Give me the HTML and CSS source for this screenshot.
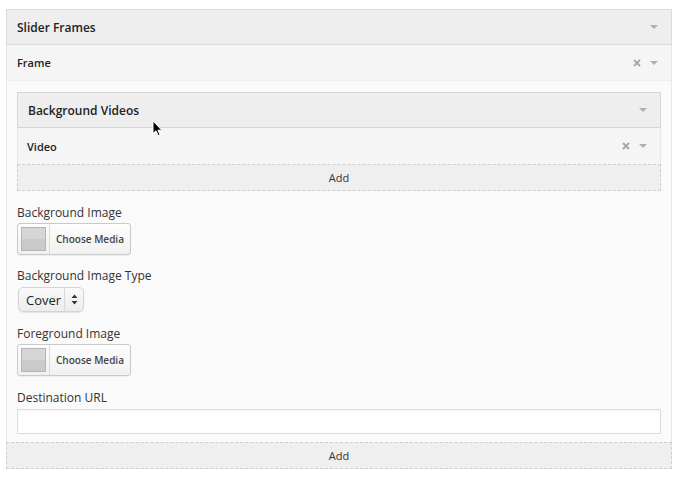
FILE: index.html
```html
<!DOCTYPE html>
<html lang="en">
<head>
    <meta charset="UTF-8">
    <title>Slider Frames</title>
    <link rel="stylesheet" href="styles.css">
</head>
<body>

    <div class="panel">
        <div class="panel-head">
            <span>Slider Frames</span>
            <span class="tools"><span class="caret"></span></span>
        </div>

        <div class="item">
            <div class="item-head">
                <span>Frame</span>
                <span class="tools">
                    <svg class="remove" width="8" height="8" viewBox="0 0 8 8"><path d="M1 1 L7 7 M7 1 L1 7" stroke="#a9a9a9" stroke-width="2"/></svg>
                    <span class="caret"></span>
                </span>
            </div>

            <div class="item-body">
                <div class="sub-panel">
                    <div class="panel-head sub-head">
                        <span>Background Videos</span>
                        <span class="tools"><span class="caret"></span></span>
                    </div>
                    <div class="item-head sub-item">
                        <span>Video</span>
                        <span class="tools">
                            <svg class="remove" width="8" height="8" viewBox="0 0 8 8"><path d="M1 1 L7 7 M7 1 L1 7" stroke="#a9a9a9" stroke-width="2"/></svg>
                            <span class="caret"></span>
                        </span>
                    </div>
                    <div class="add-btn">Add</div>
                </div>

                <div class="field">
                    <label>Background Image</label>
                    <div class="media-btn">
                        <span class="thumb"></span>
                        <span class="media-text">Choose Media</span>
                    </div>
                </div>

                <div class="field field-tight">
                    <label>Background Image Type</label>
                    <div class="select">
                        <span class="select-value">Cover</span>
                        <span class="select-arrows">
                            <svg width="7" height="11" viewBox="0 0 7 11"><path d="M3.5 0.5 L6.5 4 L0.5 4 Z M3.5 10.5 L6.5 7 L0.5 7 Z" fill="#333"/></svg>
                        </span>
                    </div>
                </div>

                <div class="field">
                    <label>Foreground Image</label>
                    <div class="media-btn">
                        <span class="thumb"></span>
                        <span class="media-text">Choose Media</span>
                    </div>
                </div>

                <div class="field">
                    <label>Destination URL</label>
                    <input type="text" class="text-input">
                </div>
            </div>
        </div>

        <div class="add-btn outer-add">Add</div>
    </div>

    <!-- mouse pointer from the screenshot -->
    <svg class="cursor" width="11" height="17" viewBox="0 0 11 17">
        <path d="M1 1 L1 13.5 L4 10.8 L6.2 15.6 L8 14.8 L5.9 10.2 L9.8 10.2 Z" fill="#000" stroke="#fff" stroke-width="1"/>
    </svg>

</body>
</html>
```

FILE: styles.css
```css
* {
    margin: 0;
    padding: 0;
    box-sizing: border-box;
}

body {
    background: #ffffff;
    font-family: 'Open Sans', 'Liberation Sans', sans-serif;
    color: #333;
    position: relative;
    width: 678px;
    height: 478px;
    overflow: hidden;
}

.panel {
    width: 666px;
    margin: 9px 0 0 6px;
}

.panel-head {
    display: flex;
    justify-content: space-between;
    align-items: center;
    height: 36px;
    padding: 0 10px;
    background: #eeeeee;
    border: 1px solid #dcdcdc;
    font-size: 12px;
    font-weight: 600;
    color: #222;
}

.tools {
    display: flex;
    align-items: center;
    gap: 9px;
}

.caret {
    width: 0;
    height: 0;
    border-left: 4px solid transparent;
    border-right: 4px solid transparent;
    border-top: 4px solid #b0b0b0;
    margin-right: 3px;
}

.remove {
    display: block;
}

.item {
    border-left: 1px solid #e8e8e8;
    border-right: 1px solid #e8e8e8;
}

.item-head {
    display: flex;
    justify-content: space-between;
    align-items: center;
    height: 36px;
    padding: 0 10px;
    background: #f5f5f5;
    border-bottom: 1px solid #ededed;
    font-size: 11px;
    font-weight: 600;
    color: #222;
}

.item-body {
    background: #fafafa;
    padding: 11px 10px 8px;
}

.sub-panel {
    border-left: 1px solid #e8e8e8;
    border-right: 1px solid #e8e8e8;
}

.sub-head {
    margin: 0 -1px;
    border-color: #d6d6d6;
}

.sub-item {
    border-bottom: none;
    padding: 0 10px 0 9px;
}

.add-btn {
    height: 27px;
    line-height: 25px;
    text-align: center;
    background: #efefef;
    border: 1px dashed #cfcfcf;
    font-size: 11px;
    color: #333;
    margin: 0 -1px;
}

.outer-add {
    margin: 0;
}

.field {
    margin-top: 13px;
}

.field-tight {
    margin-top: 12px;
}

.field label {
    display: block;
    font-size: 12px;
    line-height: 18px;
    color: #333;
    margin-bottom: 1px;
}

.media-btn {
    display: flex;
    align-items: stretch;
    width: 114px;
    height: 32px;
    border: 1px solid #c9c9c9;
    border-radius: 3px;
    background: linear-gradient(#fdfdfd, #f1f1f1);
    box-shadow: 0 1px 0 rgba(0, 0, 0, 0.05);
}

.thumb {
    width: 32px;
    display: flex;
    align-items: center;
    justify-content: center;
    border-right: 1px solid #dcdcdc;
}

.thumb::before {
    content: "";
    width: 23px;
    height: 22px;
    border: 1px solid #b5b5b5;
    background: linear-gradient(#d6d6d6 0%, #d6d6d6 50%, #cbcbcb 50%, #c9c9c9 100%);
}

.media-text {
    flex: 1;
    display: flex;
    align-items: center;
    justify-content: center;
    font-size: 10px;
    font-weight: 600;
    color: #444;
}

.select {
    display: flex;
    width: 66px;
    height: 25px;
    margin-top: 2px;
    margin-left: 1px;
    border: 1px solid #d4d4d4;
    border-radius: 5px;
    background: linear-gradient(#fafafa, #ececec);
    box-shadow: 0 1px 1px rgba(0, 0, 0, 0.08);
}

.select-value {
    flex: 1;
    display: flex;
    align-items: center;
    padding-left: 7px;
    font-size: 13px;
    color: #222;
}

.select-arrows {
    width: 19px;
    display: flex;
    align-items: center;
    justify-content: center;
    border-left: 1px solid #dadada;
}

.text-input {
    display: block;
    width: 100%;
    height: 25px;
    margin-top: 2px;
    border: 1px solid #dddddd;
    background: #ffffff;
    box-shadow: inset 0 1px 2px rgba(0, 0, 0, 0.05);
    outline: none;
}

.cursor {
    position: absolute;
    left: 152px;
    top: 120px;
}
```
